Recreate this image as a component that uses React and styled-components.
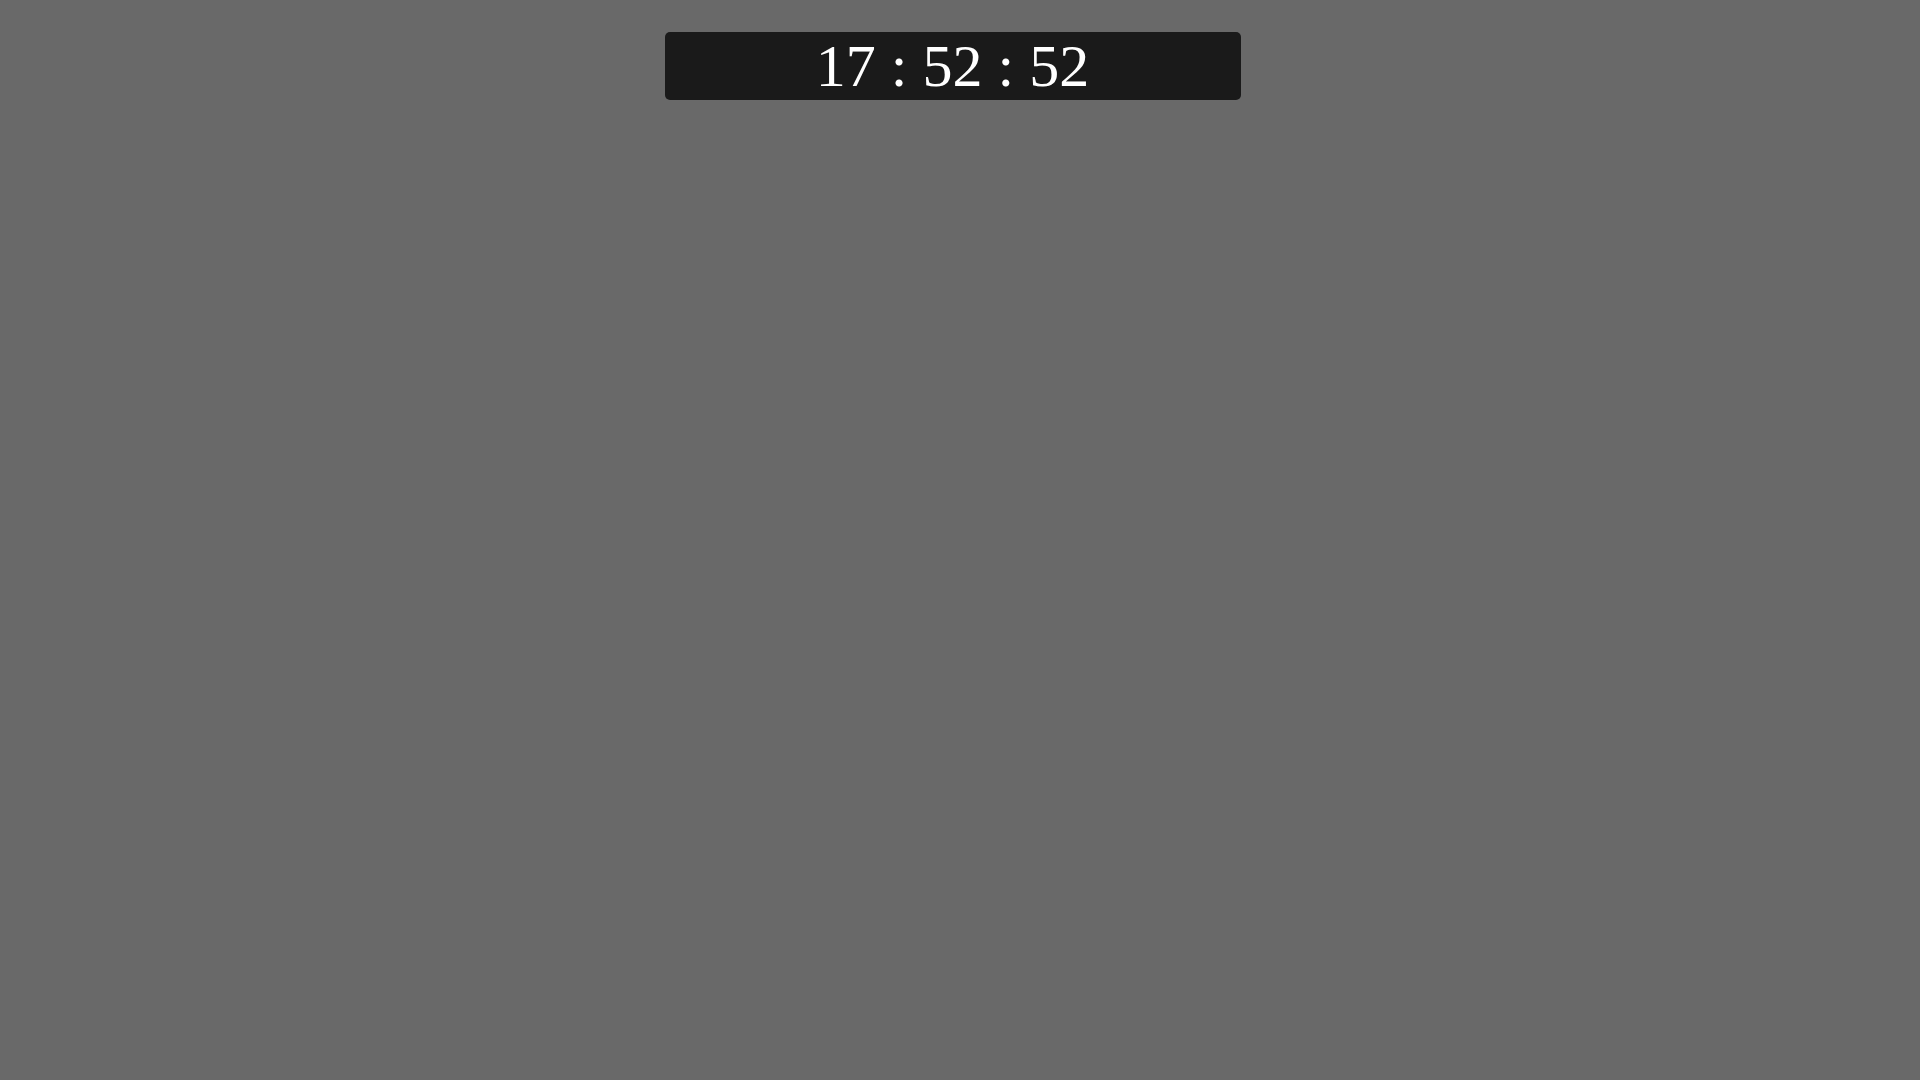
import React from "react";
import styled, { createGlobalStyle } from "styled-components";

const GlobalStyle = createGlobalStyle`
  html, body {
    margin: 0;
    padding: 0;
    background-color: #696969;
  }
  * {
    box-sizing: border-box;
  }
`;

// the right padding keeps the clock centred as if a 15px scrollbar were there
const StyledPage = styled.div`
  display: flex;
  flex-direction: column;
  align-items: center;
  min-height: 1145px;
  padding: 32px 15px 0 0;
  font-family: "Liberation Serif", "Times New Roman", serif;
`;

const StyledClock = styled.div`
  display: flex;
  justify-content: center;
  align-items: center;
  width: 30vw;
  height: 68px;
  background-color: #1a1a1a;
  border-radius: 5px;
  color: #ffffff;
  font-size: 60px;
  line-height: 1;
`;

const StyledTime = styled.span`
  white-space: pre;
`;

function App() {
  return (
    <>
      <GlobalStyle />
      <StyledPage>
        <StyledClock>
          <StyledTime>17 : 52 : 52</StyledTime>
        </StyledClock>
      </StyledPage>
    </>
  );
}

export default App;
